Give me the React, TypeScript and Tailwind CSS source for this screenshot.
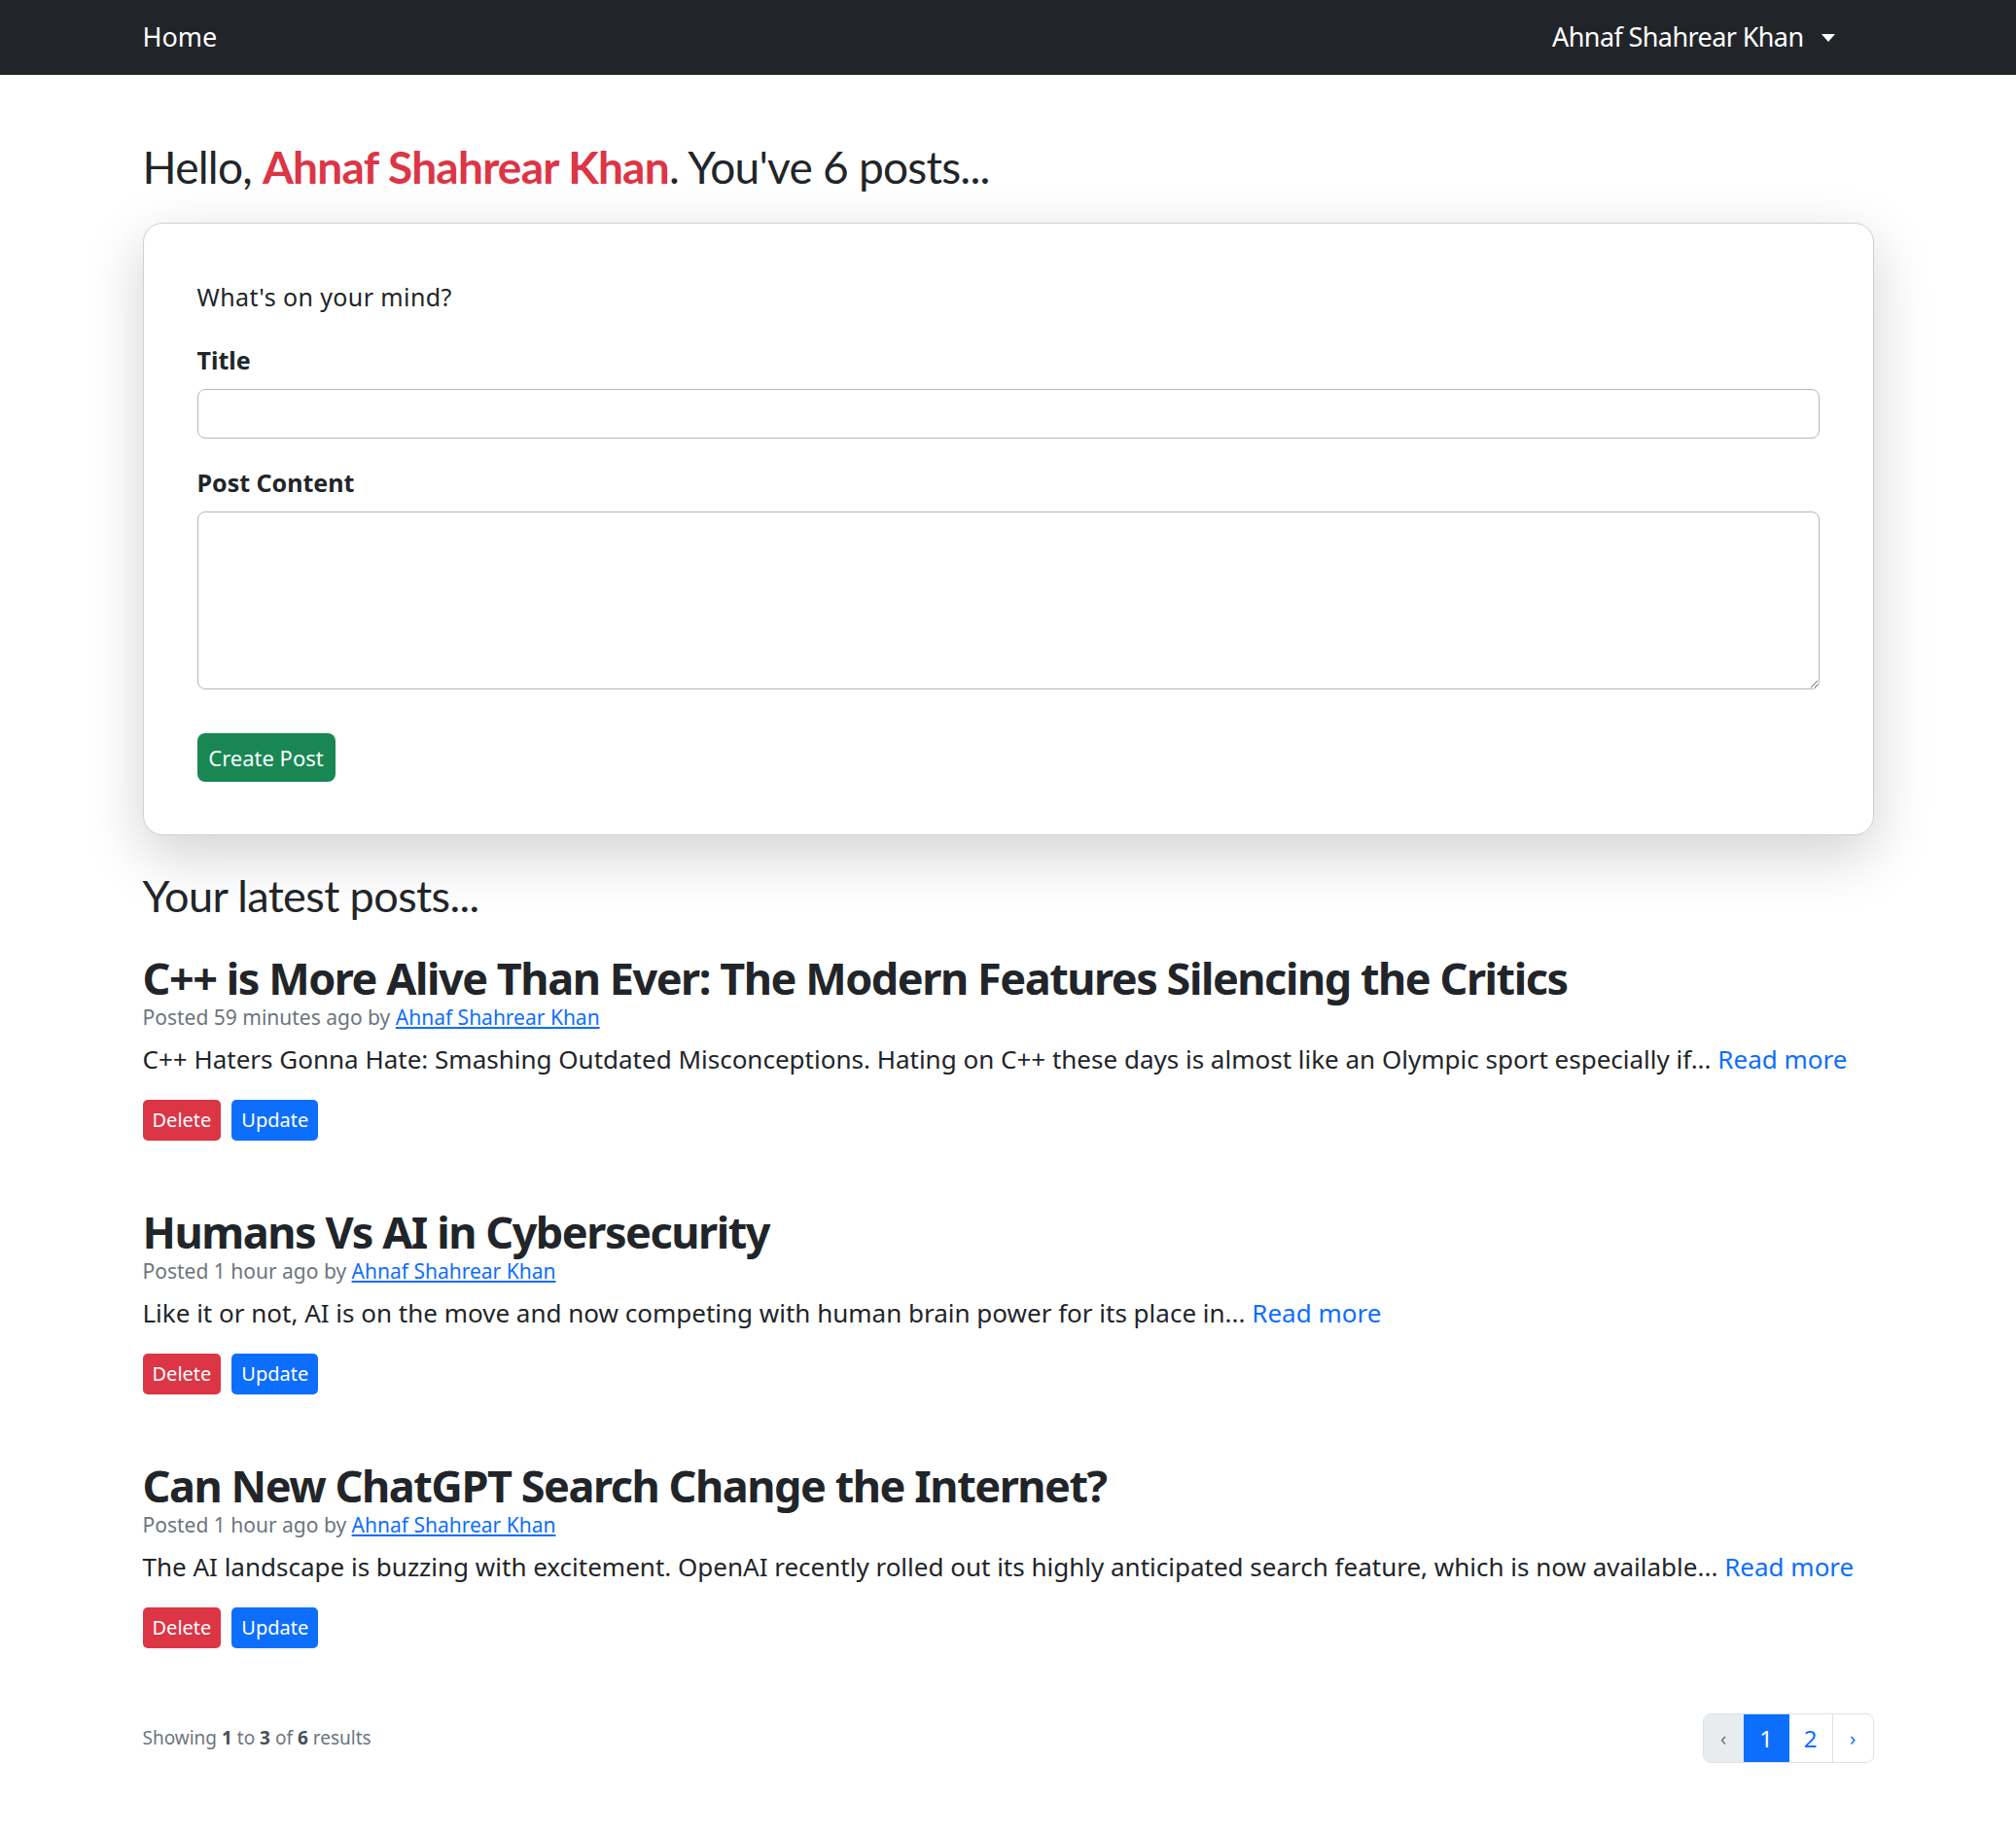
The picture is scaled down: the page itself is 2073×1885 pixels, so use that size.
import React from "react";

const posts = [
  {
    title: "C++ is More Alive Than Ever: The Modern Features Silencing the Critics",
    time: "59 minutes ago",
    excerpt:
      "C++ Haters Gonna Hate: Smashing Outdated Misconceptions. Hating on C++ these days is almost like an Olympic sport especially if...",
  },
  {
    title: "Humans Vs AI in Cybersecurity",
    time: "1 hour ago",
    excerpt: "Like it or not, AI is on the move and now competing with human brain power for its place in...",
  },
  {
    title: "Can New ChatGPT Search Change the Internet?",
    time: "1 hour ago",
    excerpt:
      "The AI landscape is buzzing with excitement. OpenAI recently rolled out its highly anticipated search feature, which is now available...",
  },
];

const Navbar = () => (
  <nav className="bg-[#212529] h-[77px]">
    <div className="mx-auto w-[1780px] h-full flex items-center justify-between">
      <a href="#" className="text-white text-[27px]">Home</a>
      <button className="text-white text-[27px] tracking-[-0.6px] flex items-center gap-[18px] mr-[40px]">
        Ahnaf Shahrear Khan
        <span className="inline-block w-0 h-0 border-x-[7px] border-x-transparent border-t-[8px] border-t-white"></span>
      </button>
    </div>
  </nav>
);

const PostItem = ({ post }: { post: (typeof posts)[number] }) => (
  <div className="flex flex-col">
    <h2 className="text-[45px] leading-[52px] font-bold tracking-[-1.45px] text-[#212529]">{post.title}</h2>
    <p className="text-[21px] leading-[28px] text-[#6c757d]">
      Posted {post.time} by{" "}
      <a href="#" className="text-[#0d6efd] underline">Ahnaf Shahrear Khan</a>
    </p>
    <p className="mt-[11px] text-[26px] leading-[36px] text-[#212529]">
      {post.excerpt} <a href="#" className="text-[#0d6efd]">Read more</a>
    </p>
    <div className="mt-[24px] flex gap-[11px]">
      <button className="h-[42px] px-[10px] rounded-[5px] bg-[#dc3545] text-white text-[20px]">Delete</button>
      <button className="h-[42px] px-[10px] rounded-[5px] bg-[#0d6efd] text-white text-[20px]">Update</button>
    </div>
  </div>
);

const App = () => {
  return (
    <main className="min-h-screen bg-white font-['Noto_Sans',sans-serif] text-[#212529]">
      <Navbar />
      <div className="mx-auto w-[1780px] pb-[70px]">
        <h3 className="mt-[67px] text-[46px] leading-[56px] tracking-[-0.75px] font-['Lato',sans-serif]">
          Hello, <span className="text-[#dc3545] font-bold">Ahnaf Shahrear Khan</span>. You've 6 posts...
        </h3>

        <section className="mt-[29px] border border-[#d0d0d0] rounded-[20px] bg-white shadow-[0_20px_60px_rgba(0,0,0,0.18)] px-[55px] pt-[56px] pb-[54px]">
          <p className="text-[25px] leading-[38px] tracking-[0.4px]">What's on your mind?</p>
          <label className="block mt-[27px] text-[25px] leading-[38px] font-bold">Title</label>
          <input className="mt-[11px] block w-full h-[51px] border border-[#b3b7bb] rounded-[8px] px-[16px] text-[25px] outline-none" />
          <label className="block mt-[26px] text-[25px] leading-[38px] font-bold">Post Content</label>
          <textarea className="mt-[11px] block w-full h-[183px] border border-[#b3b7bb] rounded-[8px] px-[16px] py-[8px] text-[25px] outline-none"></textarea>
          <button className="mt-[45px] h-[50px] w-[142px] rounded-[8px] bg-[#198754] text-white text-[22px]">Create Post</button>
        </section>

        <h3 className="mt-[34px] text-[45px] leading-[56px] tracking-[-0.6px] font-['Lato',sans-serif]">Your latest posts...</h3>

        <div className="mt-[31px] flex flex-col gap-[68px]">
          {posts.map((p) => (
            <PostItem key={p.title} post={p} />
          ))}
        </div>

        <div className="mt-[67px] flex items-center justify-between">
          <p className="text-[19px] text-[#6c757d]">
            Showing <span className="font-bold text-[#495057]">1</span> to <span className="font-bold text-[#495057]">3</span> of{" "}
            <span className="font-bold text-[#495057]">6</span> results
          </p>
          <div className="flex h-[51px] border border-[#dee2e6] rounded-[8px] overflow-hidden text-[24px]">
            <span className="w-[41px] flex items-center justify-center bg-[#e9ecef] text-[#6c757d] text-[20px]">‹</span>
            <span className="w-[47px] flex items-center justify-center bg-[#0d6efd] text-white">1</span>
            <span className="w-[45px] flex items-center justify-center text-[#0d6efd] border-r border-[#dee2e6]">2</span>
            <span className="w-[41px] flex items-center justify-center text-[#0d6efd] text-[20px]">›</span>
          </div>
        </div>
      </div>
    </main>
  );
};

export default App;
